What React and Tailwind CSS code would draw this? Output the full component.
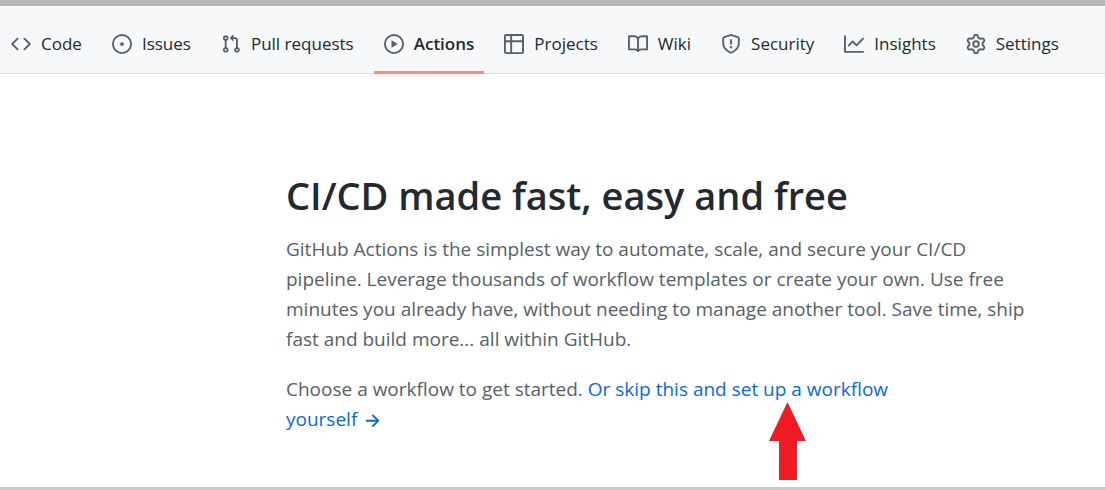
const ICONS = {
  code: "M4.72 3.22a.75.75 0 011.06 1.06L2.06 8l3.72 3.72a.75.75 0 11-1.06 1.06L.47 8.53a.75.75 0 010-1.06l4.25-4.25zm6.56 0a.75.75 0 10-1.06 1.06L13.94 8l-3.72 3.72a.75.75 0 101.06 1.06l4.25-4.25a.75.75 0 000-1.06l-4.25-4.25z",
  issue: "M8 9.5a1.5 1.5 0 100-3 1.5 1.5 0 000 3zM8 0a8 8 0 100 16A8 8 0 008 0zM1.5 8a6.5 6.5 0 1113 0 6.5 6.5 0 01-13 0z",
  pull: "M7.177 3.073L9.573.677A.25.25 0 0110 .854v4.792a.25.25 0 01-.427.177L7.177 3.427a.25.25 0 010-.354zM3.75 2.5a.75.75 0 100 1.5.75.75 0 000-1.5zm-2.25.75a2.25 2.25 0 113 2.122v5.256a2.251 2.251 0 11-1.5 0V5.372A2.25 2.25 0 011.5 3.25zM11 2.5h-1V4h1a1 1 0 011 1v5.628a2.251 2.251 0 101.5 0V5A2.5 2.5 0 0011 2.5zm1 10.25a.75.75 0 111.5 0 .75.75 0 01-1.5 0zM3.75 12a.75.75 0 100 1.5.75.75 0 000-1.5z",
  play: "M1.5 8a6.5 6.5 0 1113 0 6.5 6.5 0 01-13 0zM8 0a8 8 0 100 16A8 8 0 008 0zM6.379 5.227A.25.25 0 006 5.442v5.117a.25.25 0 00.379.214l4.264-2.559a.25.25 0 000-.428L6.379 5.227z",
  table: "M0 1.75C0 .784.784 0 1.75 0h12.5C15.216 0 16 .784 16 1.75v12.5A1.75 1.75 0 0114.25 16H1.75A1.75 1.75 0 010 14.25V1.75zM1.5 6.5v7.75c0 .138.112.25.25.25H5v-8H1.5zM5 5H1.5V1.75a.25.25 0 01.25-.25H5V5zm1.5 1.5v8h7.75a.25.25 0 00.25-.25V6.5h-8zM14.5 5h-8V1.5h7.75a.25.25 0 01.25.25V5z",
  book: "M0 1.75A.75.75 0 01.75 1h4.253c1.227 0 2.317.59 3 1.501A3.744 3.744 0 0111.006 1h4.245a.75.75 0 01.75.75v10.5a.75.75 0 01-.75.75h-4.507a2.25 2.25 0 00-1.591.659l-.622.621a.75.75 0 01-1.06 0l-.622-.621A2.25 2.25 0 005.258 13H.75a.75.75 0 01-.75-.75V1.75zm8.755 3a2.25 2.25 0 012.25-2.25H14.5v9h-3.757c-.71 0-1.4.201-1.992.572l.004-7.322zm-1.504 7.324l.004-5.073-.002-2.253A2.25 2.25 0 005.003 2.5H1.5v9h3.757a3.75 3.75 0 011.994.574z",
  shield: "M7.467.133a1.75 1.75 0 011.066 0l5.25 1.68A1.75 1.75 0 0115 3.48V7c0 1.566-.32 3.182-1.303 4.682-.983 1.498-2.585 2.813-5.032 3.855a1.7 1.7 0 01-1.33 0c-2.447-1.042-4.049-2.357-5.032-3.855C1.32 10.182 1 8.566 1 7V3.48a1.75 1.75 0 011.217-1.667l5.25-1.68zm.61 1.429a.25.25 0 00-.153 0l-5.25 1.68a.25.25 0 00-.174.238V7c0 1.358.275 2.666 1.057 3.86.784 1.194 2.121 2.34 4.366 3.297a.2.2 0 00.154 0c2.245-.956 3.582-2.104 4.366-3.298C13.225 9.666 13.5 8.36 13.5 7V3.48a.25.25 0 00-.174-.237l-5.25-1.68zM9 10.5a1 1 0 11-2 0 1 1 0 012 0zm-.25-5.75a.75.75 0 10-1.5 0v3a.75.75 0 001.5 0v-3z",
  graph: "M1.5 1.75a.75.75 0 00-1.5 0v12.5c0 .414.336.75.75.75h14.5a.75.75 0 000-1.5H1.5V1.75zm14.28 2.53a.75.75 0 00-1.06-1.06L10 7.94 7.53 5.47a.75.75 0 00-1.06 0L3.22 8.72a.75.75 0 001.06 1.06L7 7.06l2.47 2.47a.75.75 0 001.06 0l5.25-5.25z",
  gear: "M7.429 1.525a6.593 6.593 0 011.142 0c.036.003.108.036.137.146l.289 1.105c.147.56.55.967.997 1.189.174.086.341.183.501.29.417.278.97.423 1.53.27l1.102-.303c.11-.03.175.016.195.046.219.31.41.641.573.989.014.031.022.11-.059.19l-.815.806c-.411.406-.562.957-.53 1.456a4.588 4.588 0 010 .582c-.032.499.119 1.05.53 1.456l.815.806c.08.08.073.159.059.19a6.494 6.494 0 01-.573.99c-.02.029-.086.074-.195.045l-1.103-.303c-.559-.153-1.112-.008-1.529.27-.16.107-.327.204-.5.29-.449.222-.851.628-.998 1.189l-.289 1.105c-.029.11-.101.143-.137.146a6.613 6.613 0 01-1.142 0c-.036-.003-.108-.037-.137-.146l-.289-1.105c-.147-.56-.55-.967-.997-1.189a4.502 4.502 0 01-.501-.29c-.417-.278-.97-.423-1.53-.27l-1.102.303c-.11.03-.175-.016-.195-.046a6.492 6.492 0 01-.573-.989c-.014-.031-.022-.11.059-.19l.815-.806c.411-.406.562-.957.53-1.456a4.587 4.587 0 010-.582c.032-.499-.119-1.05-.53-1.456l-.815-.806c-.08-.08-.073-.159-.059-.19a6.44 6.44 0 01.573-.99c.02-.029.086-.075.195-.045l1.103.303c.559.153 1.112.008 1.529-.27.16-.107.327-.204.5-.29.449-.222.851-.628.998-1.189l.289-1.105c.029-.11.101-.143.137-.146zM8 0c-.236 0-.47.01-.701.03-.743.065-1.29.615-1.458 1.261l-.29 1.106c-.017.066-.078.158-.211.224a5.994 5.994 0 00-.668.386c-.123.082-.233.09-.3.071L3.27 2.776c-.644-.177-1.392.02-1.82.63a7.977 7.977 0 00-.704 1.217c-.315.675-.111 1.422.363 1.891l.815.806c.05.048.098.147.088.294a6.084 6.084 0 000 .772c.01.147-.038.246-.088.294l-.815.806c-.474.469-.678 1.216-.363 1.891.2.428.436.835.704 1.218.428.609 1.176.806 1.82.63l1.103-.303c.066-.019.176-.011.299.071.213.143.436.272.668.386.133.066.194.158.212.224l.289 1.106c.169.646.715 1.196 1.458 1.26a8.094 8.094 0 001.402 0c.743-.064 1.29-.614 1.458-1.26l.29-1.106c.017-.066.078-.158.211-.224a5.98 5.98 0 00.668-.386c.123-.082.233-.09.3-.071l1.102.302c.644.177 1.392-.02 1.82-.63.268-.382.505-.789.704-1.217.315-.675.111-1.422-.364-1.891l-.814-.806c-.05-.048-.098-.147-.088-.294a6.1 6.1 0 000-.772c-.01-.147.039-.246.088-.294l.814-.806c.475-.469.679-1.216.364-1.891a7.992 7.992 0 00-.704-1.218c-.428-.609-1.176-.806-1.82-.63l-1.103.303c-.066.019-.176.011-.299-.071a5.991 5.991 0 00-.668-.386c-.133-.066-.194-.158-.212-.224L10.16 1.29C9.99.645 9.444.095 8.701.031A8.094 8.094 0 008 0zm1.5 8a1.5 1.5 0 11-3 0 1.5 1.5 0 013 0zM11 8a3 3 0 11-6 0 3 3 0 016 0z",
  arrow: "M8.22 2.97a.75.75 0 011.06 0l4.25 4.25a.75.75 0 010 1.06l-4.25 4.25a.75.75 0 01-1.06-1.06l2.97-2.97H3.75a.75.75 0 010-1.5h7.44L8.22 4.03a.75.75 0 010-1.06z",
};

const TABS = [
  { label: "Code", icon: "code" },
  { label: "Issues", icon: "issue" },
  { label: "Pull requests", icon: "pull" },
  { label: "Actions", icon: "play", active: true },
  { label: "Projects", icon: "table" },
  { label: "Wiki", icon: "book" },
  { label: "Security", icon: "shield" },
  { label: "Insights", icon: "graph" },
  { label: "Settings", icon: "gear" },
];

function Icon({ name, className }) {
  return (
    <svg viewBox="0 0 16 16" aria-hidden="true" className={className} fill="currentColor" fillRule="evenodd">
      <path d={ICONS[name]} />
    </svg>
  );
}

function Tab({ label, icon, active }) {
  return (
    <a
      href="#"
      aria-current={active ? "page" : undefined}
      className={
        "flex items-center gap-[10px] border-b-3 px-[10px] pt-[11px] whitespace-nowrap " +
        (active ? "border-[#fd8c73] font-semibold" : "border-transparent")
      }
    >
      <Icon name={icon} className="size-5 shrink-0 text-[#57606a]" />
      {label}
    </a>
  );
}

export default function App() {
  return (
    <div className="flex min-h-screen flex-col border-t-6 border-b-3 border-t-[#b5b7b6] border-b-[#c9c9c9] bg-white font-['Open_Sans','Noto_Sans',sans-serif] text-[#24292f]">
      <nav
        aria-label="Repository"
        className="flex h-17 gap-[10px] bg-[#f6f8fa] pl-px text-[17px] shadow-[inset_0_-1px_0_#d8dee4]"
      >
        {TABS.map((tab) => (
          <Tab key={tab.label} {...tab} />
        ))}
      </nav>

      <main className="relative max-w-[1030px] pt-[91px] pl-[286px]">
        <h1 className="text-[38px] leading-15 font-semibold">CI/CD made fast, easy and free</h1>
        <p className="mt-[9px] text-[19px] leading-[30px] text-[#57606a]">
          GitHub Actions is the simplest way to automate, scale, and secure your CI/CD pipeline. Leverage thousands of
          workflow templates or create your own. Use free minutes you already have, without needing to manage another
          tool. Save time, ship fast and build more... all within GitHub.
        </p>
        <p className="mt-5 max-w-[640px] text-[19px] leading-[30px] text-[#57606a]">
          Choose a workflow to get started.{" "}
          <a href="#" className="text-[#0969da]">
            Or skip this and set up a workflow yourself <Icon name="arrow" className="inline size-5" />
          </a>
        </p>
        <svg
          viewBox="0 0 37 78"
          aria-hidden="true"
          className="absolute top-[328px] left-[769px] h-[78px] w-[37px]"
          fill="#ed1c24"
        >
          <path d="M18.5 0L37 39H28V78H10V39H0z" />
        </svg>
      </main>
    </div>
  );
}
